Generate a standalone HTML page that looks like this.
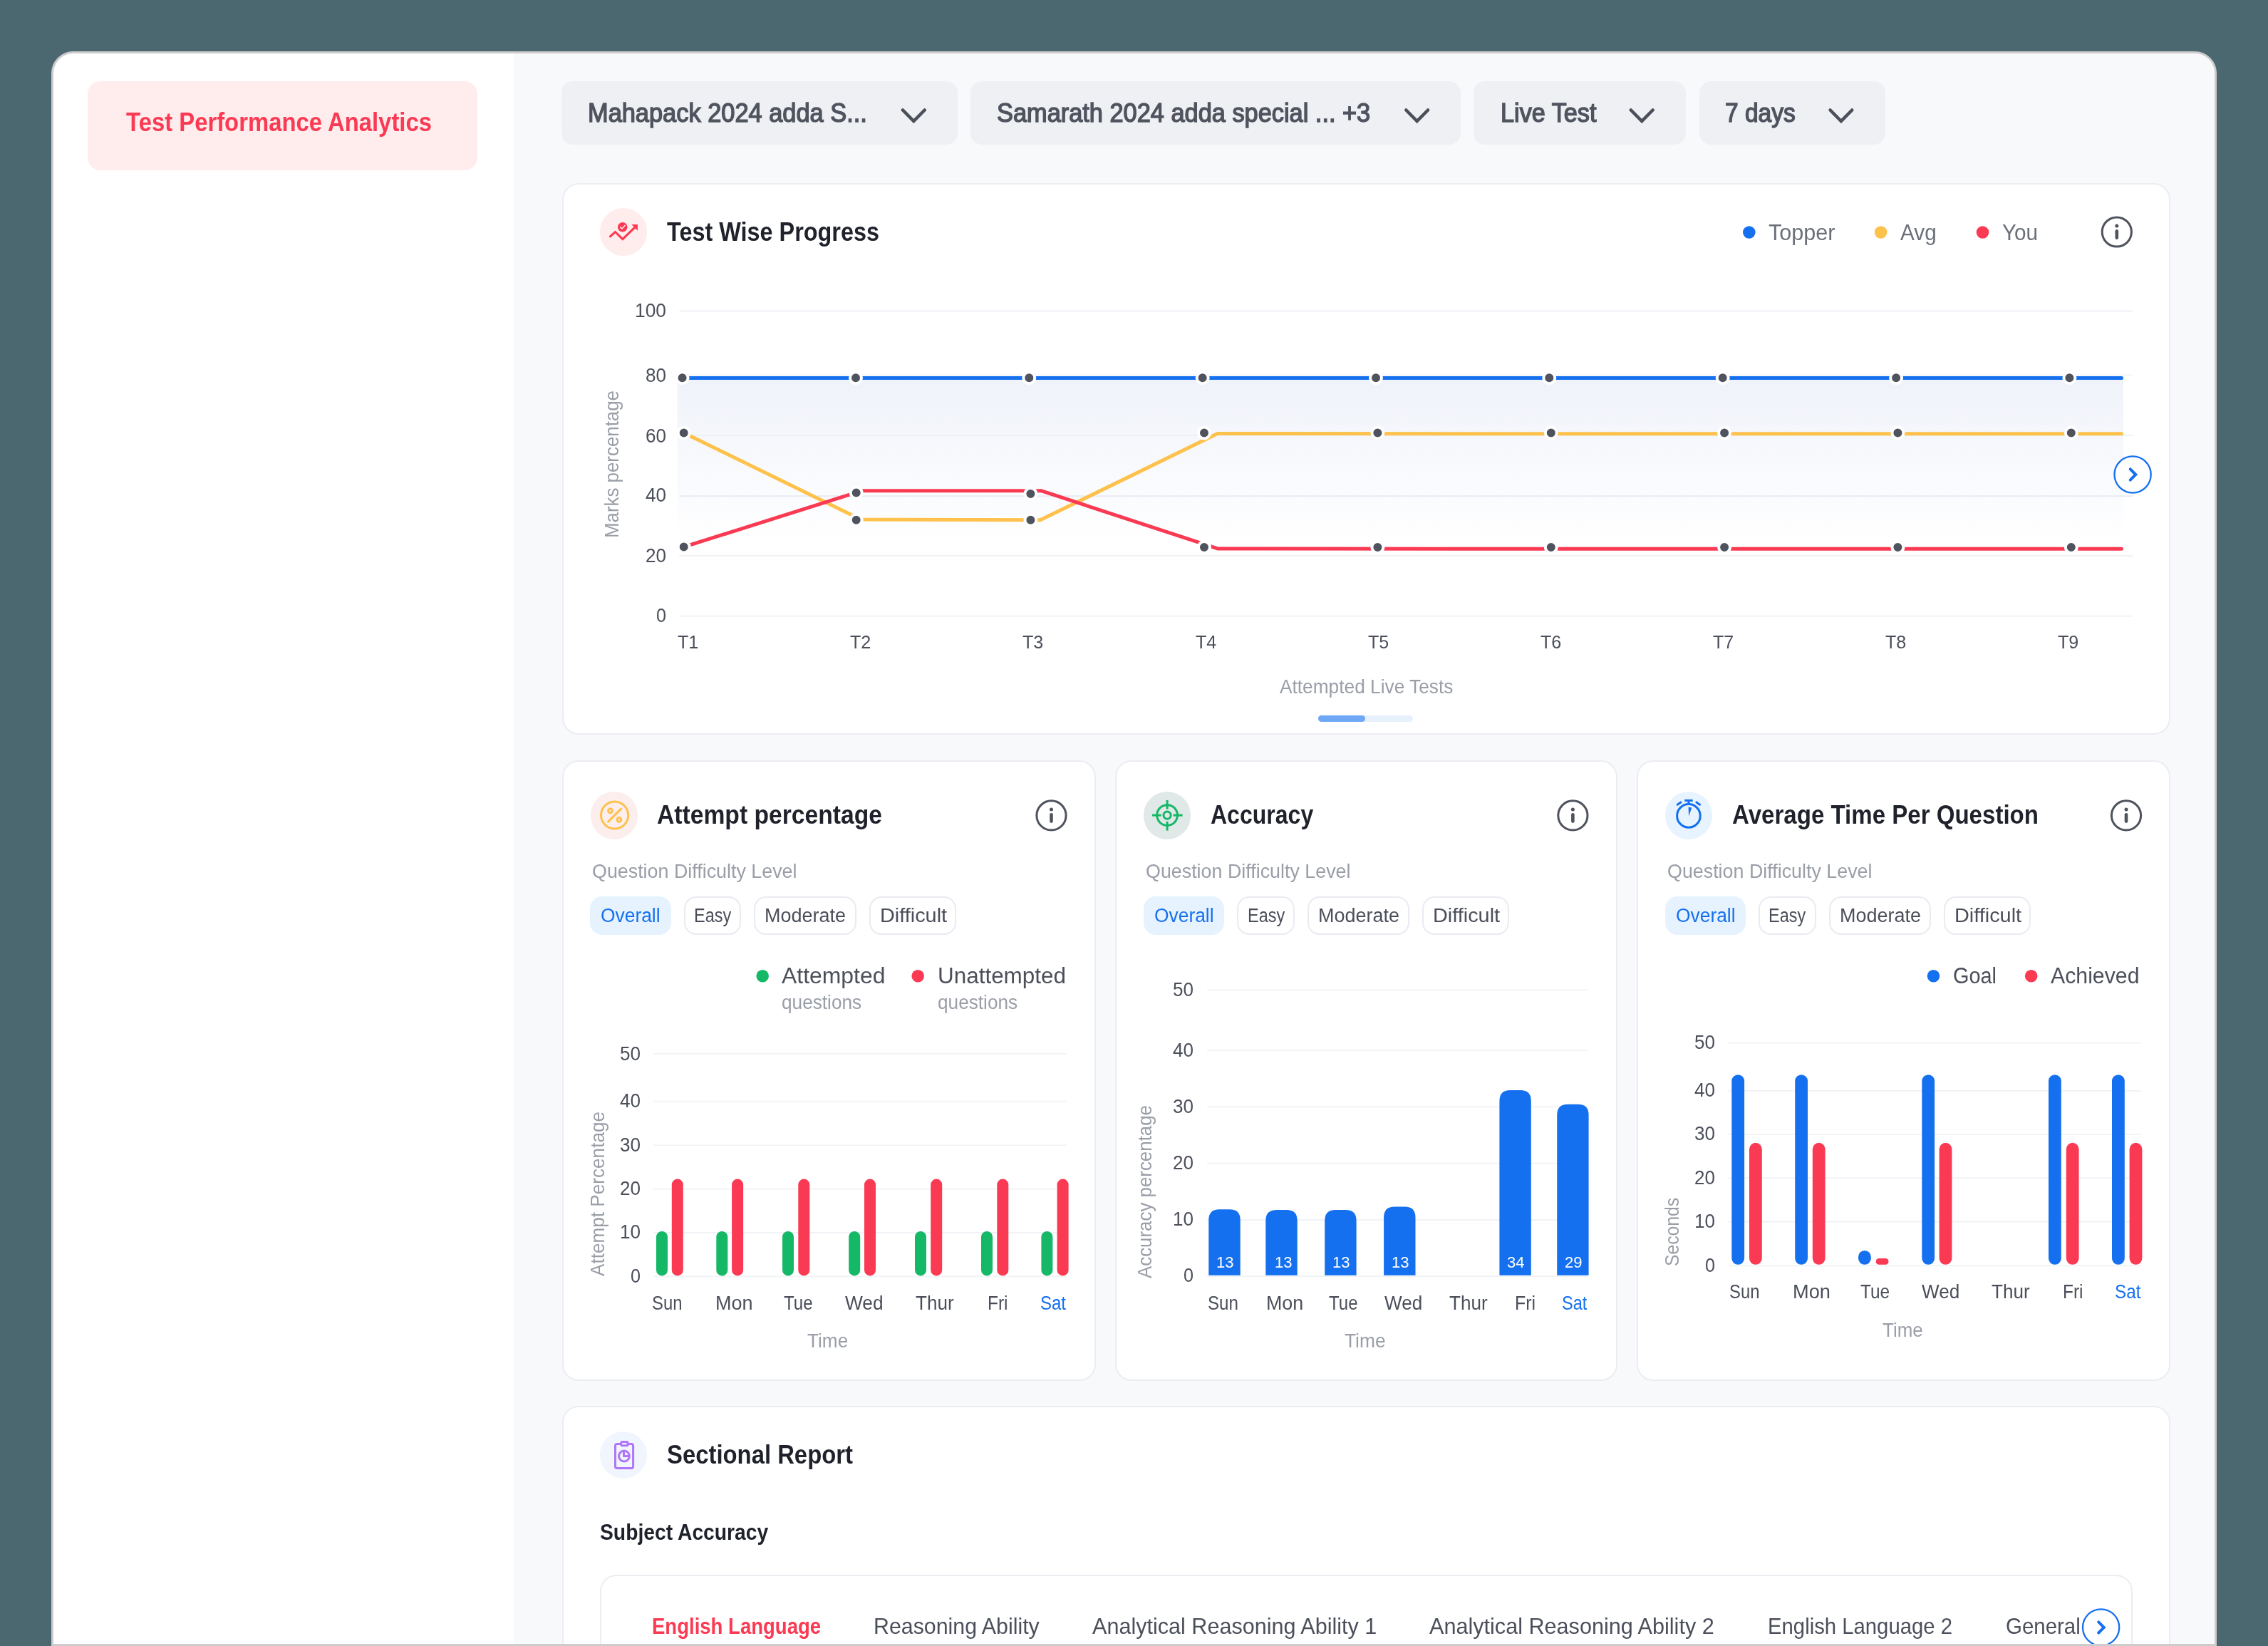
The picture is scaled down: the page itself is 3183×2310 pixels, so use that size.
<!DOCTYPE html>
<html lang="en">
<head>
<meta charset="utf-8">
<title>Test Performance Analytics</title>
<style>
html,body{margin:0;padding:0;}
body{width:3183px;height:2310px;overflow:hidden;background:#4b6770;font-family:"Liberation Sans",sans-serif;position:relative;}
#app{position:absolute;left:0;top:0;width:3183px;height:2310px;overflow:hidden;will-change:transform;}
.abs{position:absolute;box-sizing:border-box;}
.t{position:absolute;white-space:pre;line-height:1;transform-origin:0 50%;font-family:"Liberation Sans",sans-serif;}
.r{position:absolute;width:0;height:0;transform:rotate(-90deg);}
.shell{left:72px;top:72px;width:3039px;height:2260px;border:3px solid #cccccc;border-radius:31px 31px 0 0;background:#ffffff;overflow:hidden;}
.shellbottom{left:72px;top:2307px;width:3039px;height:3px;background:#cccccc;}
.main{left:646px;top:0px;width:2387px;height:2232px;background:#f8f9fb;}
.side-btn{left:123px;top:114px;width:547px;height:125px;border-radius:18px;background:#ffeced;}
.dd{top:114px;height:89px;border-radius:16px;background:#eef0f4;}
.card{background:#ffffff;border:2.5px solid #ebedf2;border-radius:23px;}
.chip{top:1258px;height:54px;border-radius:17px;border:2px solid #e9ebf1;background:#ffffff;}
.chip.on{border:0;background:#e6f3fe;}
.ico{width:66.4px;height:66.4px;border-radius:50%;}
svg{position:absolute;left:0;top:0;overflow:visible;}
</style>
</head>
<body>
<div id="app">
<div class="abs shell"><div class="abs main"></div></div>
<div class="abs side-btn"></div>
<div class="abs dd" style="left:788.2px;width:556.3px"></div>
<div class="abs dd" style="left:1361.9px;width:688.1px"></div>
<div class="abs dd" style="left:2068.2px;width:298.1px"></div>
<div class="abs dd" style="left:2384.6px;width:261.4px"></div>
<div class="abs card" style="left:789px;top:257px;width:2257px;height:774px"></div>
<div class="abs card" style="left:789px;top:1067px;width:749px;height:871px"></div>
<div class="abs card" style="left:1565px;top:1067px;width:705px;height:871px"></div>
<div class="abs card" style="left:2297px;top:1067px;width:749px;height:871px"></div>
<div class="abs card" style="left:789px;top:1973px;width:2257px;height:400px"></div>
<div class="abs card" style="left:842px;top:2209.5px;width:2151px;height:200px"></div>
<div class="abs ico" style="left:841.9px;top:292.2px;background:#ffecec"></div>
<div class="abs ico" style="left:828.5px;top:1111.2px;background:#fbeeec"></div>
<div class="abs ico" style="left:1604.9px;top:1111.2px;background:#e0e9e8"></div>
<div class="abs ico" style="left:2337.0px;top:1111.2px;background:#e7f3fe"></div>
<div class="abs ico" style="left:842.0px;top:2009.1px;background:#f0f5fe"></div>
<div class="abs chip on" style="left:828.2px;width:113.6px"></div>
<div class="abs chip" style="left:959.6px;width:80.4px"></div>
<div class="abs chip" style="left:1058.4px;width:143.2px"></div>
<div class="abs chip" style="left:1219.6px;width:122.0px"></div>
<div class="abs chip on" style="left:1604.9px;width:113.6px"></div>
<div class="abs chip" style="left:1736.3px;width:80.4px"></div>
<div class="abs chip" style="left:1835.1px;width:143.2px"></div>
<div class="abs chip" style="left:1996.3px;width:122.0px"></div>
<div class="abs chip on" style="left:2336.8px;width:113.6px"></div>
<div class="abs chip" style="left:2468.2px;width:80.4px"></div>
<div class="abs chip" style="left:2567.0px;width:143.2px"></div>
<div class="abs chip" style="left:2728.2px;width:122.0px"></div>
<div class="abs" style="left:1849.6px;top:1004px;width:133.3px;height:9.2px;border-radius:5px;background:#e6f1fd"></div>
<div class="abs" style="left:1849.6px;top:1004px;width:66px;height:9.2px;border-radius:5px;background:#6fa8f6"></div>
<svg width="3183" height="2310" viewBox="0 0 3183 2310">
<defs><linearGradient id="ga" x1="0" y1="0" x2="0" y2="1"><stop offset="0" stop-color="#4469c1" stop-opacity="0.085"/><stop offset="0.5" stop-color="#4469c1" stop-opacity="0.04"/><stop offset="1" stop-color="#4469c1" stop-opacity="0"/></linearGradient></defs>
<polyline points="1267.0,154.5 1282.3,170.0 1297.6,154.5" fill="none" stroke="#4b4f5a" stroke-width="4.6" stroke-linecap="round" stroke-linejoin="miter"/>
<polyline points="1973.4,154.5 1988.7,170.0 2004.0,154.5" fill="none" stroke="#4b4f5a" stroke-width="4.6" stroke-linecap="round" stroke-linejoin="miter"/>
<polyline points="2288.9,154.5 2304.2,170.0 2319.5,154.5" fill="none" stroke="#4b4f5a" stroke-width="4.6" stroke-linecap="round" stroke-linejoin="miter"/>
<polyline points="2568.6,154.5 2583.9,170.0 2599.2,154.5" fill="none" stroke="#4b4f5a" stroke-width="4.6" stroke-linecap="round" stroke-linejoin="miter"/>
<g stroke="#f0f2f6" stroke-width="1.8"><line x1="953.3" y1="436.5" x2="2993.0" y2="436.5"/><line x1="953.3" y1="526.3" x2="2993.0" y2="526.3"/><line x1="953.3" y1="611.0" x2="2993.0" y2="611.0"/><line x1="953.3" y1="696.3" x2="2993.0" y2="696.3"/><line x1="953.3" y1="780.0" x2="2993.0" y2="780.0"/><line x1="953.3" y1="864.7" x2="2993.0" y2="864.7"/></g>
<rect x="950.5" y="530" width="2029.5" height="232" fill="url(#ga)"/>
<g stroke-width="2"><line x1="953.3" y1="611" x2="2980" y2="611" stroke="#edf0f6"/><line x1="953.3" y1="696.3" x2="2993" y2="696.3" stroke="#e9ecf3"/></g>
<polyline points="957.6,530.5 2977.5,530.5" fill="none" stroke="#1570ef" stroke-width="5" stroke-linecap="round"/>
<polyline points="959.7,607.4 1201.9,726 1204,729 1460,729.8 1708.7,608.6 2977.5,608.8" fill="none" stroke="#fec14b" stroke-width="5" stroke-linecap="round" stroke-linejoin="round"/>
<polyline points="959.7,767.5 1201.9,691.2 1204,688.8 1461,688.7 1709.5,770.1 2977.5,770.3" fill="none" stroke="#fa3a53" stroke-width="5" stroke-linecap="round" stroke-linejoin="round"/>
<g fill="#4f535e" stroke="#ffffff" stroke-width="4"><circle cx="957.6" cy="530.2" r="8"/><circle cx="1201.0" cy="530.2" r="8"/><circle cx="1444.3" cy="530.2" r="8"/><circle cx="1687.7" cy="530.2" r="8"/><circle cx="1931.0" cy="530.2" r="8"/><circle cx="2174.3" cy="530.2" r="8"/><circle cx="2417.7" cy="530.2" r="8"/><circle cx="2661.1" cy="530.2" r="8"/><circle cx="2904.4" cy="530.2" r="8"/><circle cx="959.7" cy="607.4" r="8"/><circle cx="1201.7" cy="729.8" r="8"/><circle cx="1446.4" cy="729.8" r="8"/><circle cx="1690.0" cy="607.4" r="8"/><circle cx="1933.4" cy="607.4" r="8"/><circle cx="2176.8" cy="607.4" r="8"/><circle cx="2420.1" cy="607.4" r="8"/><circle cx="2663.4" cy="607.4" r="8"/><circle cx="2906.8" cy="607.4" r="8"/><circle cx="959.7" cy="767.5" r="8"/><circle cx="1201.7" cy="691.4" r="8"/><circle cx="1446.4" cy="693.0" r="8"/><circle cx="1690.0" cy="768.0" r="8"/><circle cx="1933.4" cy="768.0" r="8"/><circle cx="2176.8" cy="768.0" r="8"/><circle cx="2420.1" cy="768.0" r="8"/><circle cx="2663.4" cy="768.0" r="8"/><circle cx="2906.8" cy="768.0" r="8"/></g>
<circle cx="2454.8" cy="326" r="8.8" fill="#1570ef"/><circle cx="2639.6" cy="326" r="8.8" fill="#fec14b"/><circle cx="2782.5" cy="326" r="8.8" fill="#fa3a53"/>
<g stroke="#4f535e" fill="none"><circle cx="2970.8" cy="325.5" r="20.6" stroke-width="3"/><line x1="2970.8" y1="324.3" x2="2970.8" y2="333.7" stroke-width="4.6" stroke-linecap="round"/></g><circle cx="2970.8" cy="317.1" r="2.5" fill="#4f535e"/>
<circle cx="2993.1" cy="666.0" r="25.6" fill="#ffffff" stroke="#1570ef" stroke-width="2.3"/><polyline points="2989.7,658.4 2997.3,666.0 2989.7,673.6" fill="none" stroke="#1570ef" stroke-width="4" stroke-linecap="round" stroke-linejoin="miter"/>
<g fill="none" stroke="#fa3a53" stroke-width="3.1" stroke-linecap="round" stroke-linejoin="miter"><polyline points="856.4,331.8 863.4,325.5 873.8,335.6 891.5,318.6"/></g>
<polygon points="886.3,315 894.9,315 894.9,323.8" fill="#fa3a53"/>
<circle cx="873.7" cy="318.8" r="6.8" fill="#fa3a53"/><polyline points="870.7,318.9 872.9,321.1 877,316.6" fill="none" stroke="#ffecec" stroke-width="1.5" stroke-linecap="round" stroke-linejoin="round"/>
<g fill="none" stroke="#fec14b" stroke-width="3"><circle cx="862.6" cy="1144" r="19.1"/><circle cx="856.5" cy="1137.8" r="2.9"/><circle cx="868.9" cy="1150.3" r="2.9"/><line x1="853.6" y1="1153.1" x2="871.6" y2="1135.1" stroke-linecap="round"/></g>
<g stroke="#4f535e" fill="none"><circle cx="1475.5" cy="1144.4" r="20.6" stroke-width="3"/><line x1="1475.5" y1="1143.2" x2="1475.5" y2="1152.6" stroke-width="4.6" stroke-linecap="round"/></g><circle cx="1475.5" cy="1136.0" r="2.5" fill="#4f535e"/>
<circle cx="1070.2" cy="1369.8" r="8.8" fill="#14b866"/><circle cx="1288.2" cy="1369.8" r="8.8" fill="#fa3a53"/>
<g stroke="#f0f2f6" stroke-width="1.8"><line x1="917.4" y1="1478.9" x2="1496.6" y2="1478.9"/><line x1="917.4" y1="1545.6" x2="1496.6" y2="1545.6"/><line x1="917.4" y1="1607.3" x2="1496.6" y2="1607.3"/><line x1="917.4" y1="1668.7" x2="1496.6" y2="1668.7"/><line x1="917.4" y1="1730.0" x2="1496.6" y2="1730.0"/><line x1="917.4" y1="1791.4" x2="1496.6" y2="1791.4"/></g>
<rect x="921.0" y="1728.0" width="16.0" height="62.4" rx="8.0" ry="8.0" fill="#14b866"/>
<rect x="942.8" y="1654.6" width="16.0" height="135.8" rx="8.0" ry="8.0" fill="#fa3a53"/>
<rect x="1005.3" y="1728.0" width="16.0" height="62.4" rx="8.0" ry="8.0" fill="#14b866"/>
<rect x="1027.1" y="1654.6" width="16.0" height="135.8" rx="8.0" ry="8.0" fill="#fa3a53"/>
<rect x="1098.0" y="1728.0" width="16.0" height="62.4" rx="8.0" ry="8.0" fill="#14b866"/>
<rect x="1120.3" y="1654.6" width="16.0" height="135.8" rx="8.0" ry="8.0" fill="#fa3a53"/>
<rect x="1191.2" y="1728.0" width="16.0" height="62.4" rx="8.0" ry="8.0" fill="#14b866"/>
<rect x="1213.0" y="1654.6" width="16.0" height="135.8" rx="8.0" ry="8.0" fill="#fa3a53"/>
<rect x="1284.0" y="1728.0" width="16.0" height="62.4" rx="8.0" ry="8.0" fill="#14b866"/>
<rect x="1306.2" y="1654.6" width="16.0" height="135.8" rx="8.0" ry="8.0" fill="#fa3a53"/>
<rect x="1377.0" y="1728.0" width="16.0" height="62.4" rx="8.0" ry="8.0" fill="#14b866"/>
<rect x="1399.3" y="1654.6" width="16.0" height="135.8" rx="8.0" ry="8.0" fill="#fa3a53"/>
<rect x="1461.4" y="1728.0" width="16.0" height="62.4" rx="8.0" ry="8.0" fill="#14b866"/>
<rect x="1483.6" y="1654.6" width="16.0" height="135.8" rx="8.0" ry="8.0" fill="#fa3a53"/>
<g fill="none" stroke="#14b866" stroke-width="3"><circle cx="1638.1" cy="1144.1" r="14.4"/><circle cx="1638.1" cy="1144.1" r="5.1"/><g stroke-linecap="butt"><line x1="1638.1" y1="1123" x2="1638.1" y2="1135.6"/><line x1="1638.1" y1="1152.8" x2="1638.1" y2="1165.6"/><line x1="1617" y1="1144.1" x2="1629.7" y2="1144.1"/><line x1="1646.6" y1="1144.1" x2="1659.6" y2="1144.1"/></g></g>
<g stroke="#4f535e" fill="none"><circle cx="2207.4" cy="1144.4" r="20.6" stroke-width="3"/><line x1="2207.4" y1="1143.2" x2="2207.4" y2="1152.6" stroke-width="4.6" stroke-linecap="round"/></g><circle cx="2207.4" cy="1136.0" r="2.5" fill="#4f535e"/>
<g stroke="#f0f2f6" stroke-width="1.8"><line x1="1694.1" y1="1389.6" x2="2227.8" y2="1389.6"/><line x1="1694.1" y1="1474.3" x2="2227.8" y2="1474.3"/><line x1="1694.1" y1="1553.3" x2="2227.8" y2="1553.3"/><line x1="1694.1" y1="1632.7" x2="2227.8" y2="1632.7"/><line x1="1694.1" y1="1712.0" x2="2227.8" y2="1712.0"/><line x1="1694.1" y1="1791.0" x2="2227.8" y2="1791.0"/></g>
<path d="M1696.3,1789.7 V1712.2 Q1696.3,1697.2 1711.3,1697.2 H1725.7 Q1740.7,1697.2 1740.7,1712.2 V1789.7 Z" fill="#1570ef"/>
<path d="M1776.3,1789.7 V1713.0 Q1776.3,1698.0 1791.3,1698.0 H1805.7 Q1820.7,1698.0 1820.7,1713.0 V1789.7 Z" fill="#1570ef"/>
<path d="M1859.2,1789.7 V1713.0 Q1859.2,1698.0 1874.2,1698.0 H1888.6 Q1903.6,1698.0 1903.6,1713.0 V1789.7 Z" fill="#1570ef"/>
<path d="M1942.1,1789.7 V1708.4 Q1942.1,1693.4 1957.1,1693.4 H1971.5 Q1986.5,1693.4 1986.5,1708.4 V1789.7 Z" fill="#1570ef"/>
<path d="M2104.4,1789.7 V1545.0 Q2104.4,1530.0 2119.4,1530.0 H2133.8 Q2148.8,1530.0 2148.8,1545.0 V1789.7 Z" fill="#1570ef"/>
<path d="M2185.2,1789.7 V1564.8 Q2185.2,1549.8 2200.2,1549.8 H2214.6 Q2229.6,1549.8 2229.6,1564.8 V1789.7 Z" fill="#1570ef"/>
<g fill="none" stroke="#1570ef" stroke-width="3"><circle cx="2369.9" cy="1144.9" r="16.3"/><line x1="2364.2" y1="1123.4" x2="2375.7" y2="1123.4"/><line x1="2369.9" y1="1123.4" x2="2369.9" y2="1128.6"/><g stroke-linecap="round"><line x1="2354.2" y1="1129.2" x2="2358.9" y2="1125.9"/><line x1="2380.9" y1="1125.9" x2="2385.6" y2="1129.2"/></g></g>
<polygon points="2369.6,1132.8 2374.3,1133.4 2370.1,1145.6" fill="#1570ef"/>
<g stroke="#4f535e" fill="none"><circle cx="2984.0" cy="1144.4" r="20.6" stroke-width="3"/><line x1="2984.0" y1="1143.2" x2="2984.0" y2="1152.6" stroke-width="4.6" stroke-linecap="round"/></g><circle cx="2984.0" cy="1136.0" r="2.5" fill="#4f535e"/>
<circle cx="2713.5" cy="1369.8" r="8.8" fill="#1570ef"/><circle cx="2850.7" cy="1369.8" r="8.8" fill="#fa3a53"/>
<g stroke="#f0f2f6" stroke-width="1.8"><line x1="2425.7" y1="1463.7" x2="3004.9" y2="1463.7"/><line x1="2425.7" y1="1530.8" x2="3004.9" y2="1530.8"/><line x1="2425.7" y1="1592.1" x2="3004.9" y2="1592.1"/><line x1="2425.7" y1="1653.2" x2="3004.9" y2="1653.2"/><line x1="2425.7" y1="1714.5" x2="3004.9" y2="1714.5"/><line x1="2425.7" y1="1776.3" x2="3004.9" y2="1776.3"/></g>
<rect x="2430.3" y="1508.2" width="17.8" height="266.6" rx="8.9" ry="8.9" fill="#1570ef"/>
<rect x="2455.0" y="1603.8" width="17.8" height="171.0" rx="8.9" ry="8.9" fill="#fa3a53"/>
<rect x="2519.2" y="1508.2" width="17.8" height="266.6" rx="8.9" ry="8.9" fill="#1570ef"/>
<rect x="2543.8" y="1603.8" width="17.8" height="171.0" rx="8.9" ry="8.9" fill="#fa3a53"/>
<rect x="2697.3" y="1508.2" width="17.8" height="266.6" rx="8.9" ry="8.9" fill="#1570ef"/>
<rect x="2721.6" y="1603.8" width="17.8" height="171.0" rx="8.9" ry="8.9" fill="#fa3a53"/>
<rect x="2875.0" y="1508.2" width="17.8" height="266.6" rx="8.9" ry="8.9" fill="#1570ef"/>
<rect x="2899.8" y="1603.8" width="17.8" height="171.0" rx="8.9" ry="8.9" fill="#fa3a53"/>
<rect x="2964.0" y="1508.2" width="17.8" height="266.6" rx="8.9" ry="8.9" fill="#1570ef"/>
<rect x="2988.6" y="1603.8" width="17.8" height="171.0" rx="8.9" ry="8.9" fill="#fa3a53"/>
<rect x="2608.0" y="1755.0" width="17.8" height="19.8" rx="8.9" ry="8.9" fill="#1570ef"/>
<rect x="2632.7" y="1766.0" width="17.8" height="8.8" rx="4.4" ry="4.4" fill="#fa3a53"/>
<g fill="none" stroke="#b075fb" stroke-width="3" stroke-linejoin="round"><rect x="863.5" y="2026.4" width="25.1" height="34.2" rx="2.5"/><rect x="871.7" y="2023.4" width="9.3" height="5.4" rx="1.5" fill="#f0f5fe"/><circle cx="875.9" cy="2043.5" r="7.4"/><polyline points="875.5,2036.3 875.5,2043.6 883.2,2043.6"/></g>
<circle cx="2948.6" cy="2283.9" r="25.6" fill="#ffffff" stroke="#1570ef" stroke-width="2.3"/><polyline points="2945.2,2276.3 2952.8,2283.9 2945.2,2291.5" fill="none" stroke="#1570ef" stroke-width="4" stroke-linecap="round" stroke-linejoin="miter"/>
</svg>
<!-- text -->
<div class="t" style="font-size:37px;color:#fa3a53;font-weight:700;left:177.0px;top:152.8px;transform:scaleX(0.8877);">Test Performance Analytics</div>
<div class="t" style="font-size:36px;color:#50545f;-webkit-text-stroke:1.44px #50545f;left:825.0px;top:140.5px;transform:scaleX(0.9549);">Mahapack 2024 adda S...</div>
<div class="t" style="font-size:36px;color:#50545f;-webkit-text-stroke:1.44px #50545f;left:1398.9px;top:140.5px;transform:scaleX(0.9542);">Samarath 2024 adda special ... +3</div>
<div class="t" style="font-size:36px;color:#50545f;-webkit-text-stroke:1.44px #50545f;left:2106.0px;top:140.5px;transform:scaleX(0.9503);">Live Test</div>
<div class="t" style="font-size:36px;color:#50545f;-webkit-text-stroke:1.44px #50545f;left:2421.0px;top:140.5px;transform:scaleX(0.9304);">7 days</div>
<div class="t" style="font-size:37.5px;color:#1f222b;font-weight:700;left:936.4px;top:306.5px;transform:scaleX(0.8639);">Test Wise Progress</div>
<div class="t" style="font-size:31px;color:#6b7079;left:2482.3px;top:311.4px;transform:scaleX(0.9853);">Topper</div>
<div class="t" style="font-size:31px;color:#6b7079;left:2666.8px;top:311.4px;transform:scaleX(0.9591);">Avg</div>
<div class="t" style="font-size:31px;color:#6b7079;left:2809.6px;top:311.4px;transform:scaleX(0.9577);">You</div>
<div class="t" style="font-size:28px;color:#4b4f5a;left:890.6px;top:422.3px;transform:scaleX(0.9418);">100</div>
<div class="t" style="font-size:28px;color:#4b4f5a;left:905.6px;top:512.8px;transform:scaleX(0.9308);">80</div>
<div class="t" style="font-size:28px;color:#4b4f5a;left:905.6px;top:598.0px;transform:scaleX(0.9308);">60</div>
<div class="t" style="font-size:28px;color:#4b4f5a;left:905.6px;top:681.1px;transform:scaleX(0.9308);">40</div>
<div class="t" style="font-size:28px;color:#4b4f5a;left:905.6px;top:766.3px;transform:scaleX(0.9308);">20</div>
<div class="t" style="font-size:28px;color:#4b4f5a;left:920.6px;top:850.1px;transform:scaleX(0.8987);">0</div>
<div class="t" style="font-size:26.5px;color:#4b4f5a;left:951.2px;top:888.0px;transform:scaleX(0.9471);">T1</div>
<div class="t" style="font-size:26.5px;color:#4b4f5a;left:1193.3px;top:888.0px;transform:scaleX(0.9471);">T2</div>
<div class="t" style="font-size:26.5px;color:#4b4f5a;left:1435.4px;top:888.0px;transform:scaleX(0.9471);">T3</div>
<div class="t" style="font-size:26.5px;color:#4b4f5a;left:1677.5px;top:888.0px;transform:scaleX(0.9471);">T4</div>
<div class="t" style="font-size:26.5px;color:#4b4f5a;left:1919.6px;top:888.0px;transform:scaleX(0.9471);">T5</div>
<div class="t" style="font-size:26.5px;color:#4b4f5a;left:2161.7px;top:888.0px;transform:scaleX(0.9471);">T6</div>
<div class="t" style="font-size:26.5px;color:#4b4f5a;left:2403.8px;top:888.0px;transform:scaleX(0.9471);">T7</div>
<div class="t" style="font-size:26.5px;color:#4b4f5a;left:2645.9px;top:888.0px;transform:scaleX(0.9471);">T8</div>
<div class="t" style="font-size:26.5px;color:#4b4f5a;left:2888.0px;top:888.0px;transform:scaleX(0.9471);">T9</div>
<div class="t" style="font-size:27px;color:#9a9ea7;left:1795.7px;top:950.7px;transform:scaleX(0.9731);">Attempted Live Tests</div>
<div class="r" style="left:860.5px;top:651.7px"><div class="t" style="font-size:27px;color:#9a9ea7;left:-103.5px;top:-15.3px;transform:scaleX(0.9578)">Marks percentage</div></div>
<div class="t" style="font-size:37.5px;color:#1f222b;font-weight:700;left:922.4px;top:1124.9px;transform:scaleX(0.8973);">Attempt percentage</div>
<div class="t" style="font-size:37.5px;color:#1f222b;font-weight:700;left:1698.7px;top:1124.9px;transform:scaleX(0.8539);">Accuracy</div>
<div class="t" style="font-size:37.5px;color:#1f222b;font-weight:700;left:2431.0px;top:1124.9px;transform:scaleX(0.8817);">Average Time Per Question</div>
<div class="t" style="font-size:28.5px;color:#9a9ea7;left:831.0px;top:1208.2px;transform:scaleX(0.9419);">Question Difficulty Level</div>
<div class="t" style="font-size:27px;color:#1570ef;left:843.4px;top:1271.9px;transform:scaleX(0.9774);">Overall</div>
<div class="t" style="font-size:27px;color:#4b4f5a;left:973.8px;top:1271.9px;transform:scaleX(0.8695);">Easy</div>
<div class="t" style="font-size:27px;color:#4b4f5a;left:1073.4px;top:1271.9px;transform:scaleX(0.9984);">Moderate</div>
<div class="t" style="font-size:27px;color:#4b4f5a;left:1234.6px;top:1271.9px;transform:scaleX(1.0689);">Difficult</div>
<div class="t" style="font-size:28.5px;color:#9a9ea7;left:1607.7px;top:1208.2px;transform:scaleX(0.9419);">Question Difficulty Level</div>
<div class="t" style="font-size:27px;color:#1570ef;left:1620.1px;top:1271.9px;transform:scaleX(0.9774);">Overall</div>
<div class="t" style="font-size:27px;color:#4b4f5a;left:1750.5px;top:1271.9px;transform:scaleX(0.8695);">Easy</div>
<div class="t" style="font-size:27px;color:#4b4f5a;left:1850.1px;top:1271.9px;transform:scaleX(0.9984);">Moderate</div>
<div class="t" style="font-size:27px;color:#4b4f5a;left:2011.3px;top:1271.9px;transform:scaleX(1.0689);">Difficult</div>
<div class="t" style="font-size:28.5px;color:#9a9ea7;left:2339.6px;top:1208.2px;transform:scaleX(0.9419);">Question Difficulty Level</div>
<div class="t" style="font-size:27px;color:#1570ef;left:2352.0px;top:1271.9px;transform:scaleX(0.9774);">Overall</div>
<div class="t" style="font-size:27px;color:#4b4f5a;left:2482.4px;top:1271.9px;transform:scaleX(0.8695);">Easy</div>
<div class="t" style="font-size:27px;color:#4b4f5a;left:2582.0px;top:1271.9px;transform:scaleX(0.9984);">Moderate</div>
<div class="t" style="font-size:27px;color:#4b4f5a;left:2743.2px;top:1271.9px;transform:scaleX(1.0689);">Difficult</div>
<div class="t" style="font-size:31px;color:#4b4f5a;left:1097.3px;top:1354.2px;transform:scaleX(1.0289);">Attempted</div>
<div class="t" style="font-size:27px;color:#9a9ea7;left:1097.3px;top:1393.9px;transform:scaleX(0.9706);">questions</div>
<div class="t" style="font-size:31px;color:#4b4f5a;left:1316.0px;top:1354.2px;transform:scaleX(1.0141);">Unattempted</div>
<div class="t" style="font-size:27px;color:#9a9ea7;left:1316.0px;top:1393.9px;transform:scaleX(0.9706);">questions</div>
<div class="t" style="font-size:31px;color:#4b4f5a;left:2741.0px;top:1354.2px;transform:scaleX(0.9315);">Goal</div>
<div class="t" style="font-size:31px;color:#4b4f5a;left:2877.9px;top:1354.2px;transform:scaleX(0.9762);">Achieved</div>
<div class="t" style="font-size:28px;color:#4b4f5a;left:870.1px;top:1464.5px;transform:scaleX(0.9308);">50</div>
<div class="t" style="font-size:28px;color:#4b4f5a;left:870.1px;top:1530.9px;transform:scaleX(0.9308);">40</div>
<div class="t" style="font-size:28px;color:#4b4f5a;left:870.1px;top:1592.6px;transform:scaleX(0.9308);">30</div>
<div class="t" style="font-size:28px;color:#4b4f5a;left:870.1px;top:1654.0px;transform:scaleX(0.9308);">20</div>
<div class="t" style="font-size:28px;color:#4b4f5a;left:870.1px;top:1715.3px;transform:scaleX(0.9308);">10</div>
<div class="t" style="font-size:28px;color:#4b4f5a;left:885.1px;top:1776.7px;transform:scaleX(0.8987);">0</div>
<div class="t" style="font-size:28px;color:#4b4f5a;left:1646.4px;top:1374.9px;transform:scaleX(0.9308);">50</div>
<div class="t" style="font-size:28px;color:#4b4f5a;left:1646.4px;top:1459.6px;transform:scaleX(0.9308);">40</div>
<div class="t" style="font-size:28px;color:#4b4f5a;left:1646.4px;top:1538.6px;transform:scaleX(0.9308);">30</div>
<div class="t" style="font-size:28px;color:#4b4f5a;left:1646.4px;top:1618.0px;transform:scaleX(0.9308);">20</div>
<div class="t" style="font-size:28px;color:#4b4f5a;left:1646.4px;top:1697.3px;transform:scaleX(0.9308);">10</div>
<div class="t" style="font-size:28px;color:#4b4f5a;left:1661.4px;top:1776.3px;transform:scaleX(0.8987);">0</div>
<div class="t" style="font-size:28px;color:#4b4f5a;left:2378.0px;top:1449.0px;transform:scaleX(0.9308);">50</div>
<div class="t" style="font-size:28px;color:#4b4f5a;left:2378.0px;top:1516.1px;transform:scaleX(0.9308);">40</div>
<div class="t" style="font-size:28px;color:#4b4f5a;left:2378.0px;top:1577.4px;transform:scaleX(0.9308);">30</div>
<div class="t" style="font-size:28px;color:#4b4f5a;left:2378.0px;top:1638.5px;transform:scaleX(0.9308);">20</div>
<div class="t" style="font-size:28px;color:#4b4f5a;left:2378.0px;top:1699.8px;transform:scaleX(0.9308);">10</div>
<div class="t" style="font-size:28px;color:#4b4f5a;left:2393.0px;top:1761.6px;transform:scaleX(0.8987);">0</div>
<div class="t" style="font-size:27px;color:#4b4f5a;left:914.6px;top:1815.8px;transform:scaleX(0.8825);">Sun</div>
<div class="t" style="font-size:27px;color:#4b4f5a;left:1003.9px;top:1815.8px;transform:scaleX(0.9994);">Mon</div>
<div class="t" style="font-size:27px;color:#4b4f5a;left:1099.8px;top:1815.8px;transform:scaleX(0.8917);">Tue</div>
<div class="t" style="font-size:27px;color:#4b4f5a;left:1186.2px;top:1815.8px;transform:scaleX(0.9740);">Wed</div>
<div class="t" style="font-size:27px;color:#4b4f5a;left:1285.0px;top:1815.8px;transform:scaleX(0.9652);">Thur</div>
<div class="t" style="font-size:27px;color:#4b4f5a;left:1385.5px;top:1815.8px;transform:scaleX(0.9052);">Fri</div>
<div class="t" style="font-size:27px;color:#1570ef;left:1459.6px;top:1815.8px;transform:scaleX(0.8882);">Sat</div>
<div class="t" style="font-size:27px;color:#4b4f5a;left:1695.2px;top:1815.8px;transform:scaleX(0.8950);">Sun</div>
<div class="t" style="font-size:27px;color:#4b4f5a;left:1777.0px;top:1815.8px;transform:scaleX(0.9937);">Mon</div>
<div class="t" style="font-size:27px;color:#4b4f5a;left:1864.5px;top:1815.8px;transform:scaleX(0.8895);">Tue</div>
<div class="t" style="font-size:27px;color:#4b4f5a;left:1942.8px;top:1815.8px;transform:scaleX(0.9667);">Wed</div>
<div class="t" style="font-size:27px;color:#4b4f5a;left:2033.8px;top:1815.8px;transform:scaleX(0.9652);">Thur</div>
<div class="t" style="font-size:27px;color:#4b4f5a;left:2125.5px;top:1815.8px;transform:scaleX(0.9211);">Fri</div>
<div class="t" style="font-size:27px;color:#1570ef;left:2191.8px;top:1815.8px;transform:scaleX(0.8709);">Sat</div>
<div class="t" style="font-size:27px;color:#4b4f5a;left:2427.4px;top:1799.8px;transform:scaleX(0.8825);">Sun</div>
<div class="t" style="font-size:27px;color:#4b4f5a;left:2515.6px;top:1799.8px;transform:scaleX(1.0070);">Mon</div>
<div class="t" style="font-size:27px;color:#4b4f5a;left:2610.9px;top:1799.8px;transform:scaleX(0.9049);">Tue</div>
<div class="t" style="font-size:27px;color:#4b4f5a;left:2697.0px;top:1799.8px;transform:scaleX(0.9667);">Wed</div>
<div class="t" style="font-size:27px;color:#4b4f5a;left:2795.0px;top:1799.8px;transform:scaleX(0.9652);">Thur</div>
<div class="t" style="font-size:27px;color:#4b4f5a;left:2894.5px;top:1799.8px;transform:scaleX(0.9052);">Fri</div>
<div class="t" style="font-size:27px;color:#1570ef;left:2967.8px;top:1799.8px;transform:scaleX(0.8981);">Sat</div>
<div class="t" style="font-size:27px;color:#9a9ea7;left:1133.3px;top:1869.1px;transform:scaleX(0.9695);">Time</div>
<div class="t" style="font-size:27px;color:#9a9ea7;left:1887.4px;top:1869.1px;transform:scaleX(0.9763);">Time</div>
<div class="t" style="font-size:27px;color:#9a9ea7;left:2642.3px;top:1853.8px;transform:scaleX(0.9610);">Time</div>
<div class="r" style="left:840.5px;top:1675.5px"><div class="t" style="font-size:27px;color:#9a9ea7;left:-115.5px;top:-15.3px;transform:scaleX(0.9680)">Attempt Percentage</div></div>
<div class="r" style="left:1609.0px;top:1672.5px"><div class="t" style="font-size:27px;color:#9a9ea7;left:-121.5px;top:-15.3px;transform:scaleX(0.9580)">Accuracy percentage</div></div>
<div class="r" style="left:2348.5px;top:1729.0px"><div class="t" style="font-size:27px;color:#9a9ea7;left:-48.0px;top:-15.3px;transform:scaleX(0.9136)">Seconds</div></div>
<div class="t" style="font-size:21.5px;color:#ffffff;left:1706.8px;top:1761.6px;transform:scaleX(1.0242);">13</div>
<div class="t" style="font-size:21.5px;color:#ffffff;left:1789.0px;top:1761.6px;transform:scaleX(1.0242);">13</div>
<div class="t" style="font-size:21.5px;color:#ffffff;left:1869.7px;top:1761.6px;transform:scaleX(1.0242);">13</div>
<div class="t" style="font-size:21.5px;color:#ffffff;left:1952.5px;top:1761.6px;transform:scaleX(1.0242);">13</div>
<div class="t" style="font-size:21.5px;color:#ffffff;left:2114.8px;top:1761.6px;transform:scaleX(1.0242);">34</div>
<div class="t" style="font-size:21.5px;color:#ffffff;left:2195.6px;top:1761.6px;transform:scaleX(1.0242);">29</div>
<div class="t" style="font-size:37.5px;color:#1f222b;font-weight:700;left:935.8px;top:2022.5px;transform:scaleX(0.8759);">Sectional Report</div>
<div class="t" style="font-size:31.5px;color:#1f222b;font-weight:700;left:842.3px;top:2135.0px;transform:scaleX(0.8978);">Subject Accuracy</div>
<div class="t" style="font-size:32px;color:#fa3a53;font-weight:700;left:914.6px;top:2265.6px;transform:scaleX(0.8604);">English Language</div>
<div class="t" style="font-size:32px;color:#4b4f5a;left:1226.1px;top:2265.6px;transform:scaleX(0.9483);">Reasoning Ability</div>
<div class="t" style="font-size:32px;color:#4b4f5a;left:1532.8px;top:2265.6px;transform:scaleX(0.9552);">Analytical Reasoning Ability 1</div>
<div class="t" style="font-size:32px;color:#4b4f5a;left:2006.2px;top:2265.6px;transform:scaleX(0.9562);">Analytical Reasoning Ability 2</div>
<div class="t" style="font-size:32px;color:#4b4f5a;left:2481.0px;top:2265.6px;transform:scaleX(0.9155);">English Language 2</div>
<div class="t" style="font-size:32px;color:#4b4f5a;left:2815.1px;top:2265.6px;transform:scaleX(0.9197);">General</div>
<div class="abs shellbottom"></div>
</div>
</body>
</html>
